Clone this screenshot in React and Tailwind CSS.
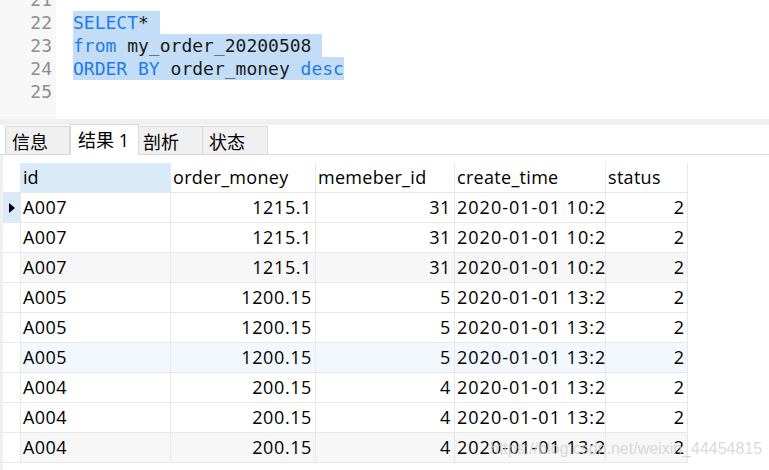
import React from "react";

const rows = [
  ["A007", "1215.1", "31", "2020-01-01 10:23:45", "2"],
  ["A007", "1215.1", "31", "2020-01-01 10:23:45", "2"],
  ["A007", "1215.1", "31", "2020-01-01 10:23:45", "2"],
  ["A005", "1200.15", "5", "2020-01-01 13:23:45", "2"],
  ["A005", "1200.15", "5", "2020-01-01 13:23:45", "2"],
  ["A005", "1200.15", "5", "2020-01-01 13:23:45", "2"],
  ["A004", "200.15", "4", "2020-01-01 13:23:45", "2"],
  ["A004", "200.15", "4", "2020-01-01 13:23:45", "2"],
  ["A004", "200.15", "4", "2020-01-01 13:23:45", "2"],
];

const rowBg = [
  "bg-white",
  "bg-white",
  "bg-[#f7f7f7]",
  "bg-white",
  "bg-white",
  "bg-[#f2f8fd]",
  "bg-white",
  "bg-white",
  "bg-[#f7f7f7]",
];

const mono = { fontFamily: '"DejaVu Sans Mono", "Liberation Mono", monospace' };

function CodeLine({ num, children }) {
  return (
    <div className="flex h-[23px] items-center">
      <div className="w-[56px] shrink-0 pr-[4px] text-right text-[#8e8e8e]">{num}</div>
      <div className="pl-[17px] whitespace-pre">{children}</div>
    </div>
  );
}

const K = ({ children }) => <span className="text-[#1f7ce8]">{children}</span>;
const Sel = ({ children }) => (
  <span className="inline-block h-[23px] leading-[23px] bg-[#c3ddf7]">{children}</span>
);

export default function App() {
  return (
    <div
      className="relative w-[769px] h-[470px] overflow-hidden bg-white text-black"
      style={{ fontFamily: '"Open Sans", "Noto Sans CJK SC", sans-serif' }}
    >
      {/* Editor */}
      <div className="relative h-[119px] overflow-hidden text-[18px]" style={mono}>
        <div className="absolute left-0 top-0 bottom-0 w-[56px] bg-[#f7f7f7]" />
        <div className="relative mt-[-12px] text-[#1a1a1a]">
          <CodeLine num="21"> </CodeLine>
          <CodeLine num="22">
            <Sel>
              <K>SELECT</K>*{" "}
            </Sel>
          </CodeLine>
          <CodeLine num="23">
            <Sel>
              <K>from</K> my_order_20200508{" "}
            </Sel>
          </CodeLine>
          <CodeLine num="24">
            <Sel>
              <K>ORDER BY</K> order_money <K>desc</K>
            </Sel>
          </CodeLine>
          <CodeLine num="25"> </CodeLine>
        </div>
      </div>

      {/* separator */}
      <div className="h-[6px] bg-[#f0f0f0]" />

      {/* Tabs */}
      <div className="flex h-[30px] items-end border-b border-[#d9d9d9] pl-[5px] text-[18px]">
        <div className="flex h-[28px] w-[65px] items-center border border-b-0 border-[#d9d9d9] bg-[#f0f0f0] pl-[6px] pt-[3px]">
          信息
        </div>
        <div className="-mb-px flex h-[31px] w-[69px] items-center border border-b-0 border-[#d9d9d9] bg-white pl-[7px] pt-[1px]">
          结果 1
        </div>
        <div className="flex h-[28px] w-[64px] items-center border border-b-0 border-l-0 border-[#d9d9d9] bg-[#f0f0f0] pl-[4px] pt-[3px]">
          剖析
        </div>
        <div className="flex h-[28px] w-[65px] items-center border border-b-0 border-l-0 border-[#d9d9d9] bg-[#f0f0f0] pl-[6px] pt-[3px]">
          状态
        </div>
      </div>

      {/* Grid */}
      <div className="flex h-[315px]">
        <div className="w-[3px] bg-[#f0f0f0]" />
        <div className="pt-[8px] text-[18px]">
          {/* header */}
          <div className="flex h-[30px] border-b border-[#e8e8e8]">
            <div className="w-[18px] border-r border-[#e8e8e8]" />
            <div className="flex w-[150px] items-center border-r border-[#e8e8e8] bg-[#d9eaf8] pl-[2px]">id</div>
            <div className="flex w-[145px] items-center border-r border-[#e8e8e8] pl-[2px] tracking-[0.3px]">order_money</div>
            <div className="flex w-[139px] items-center border-r border-[#e8e8e8] pl-[2px] tracking-[0.3px]">memeber_id</div>
            <div className="flex w-[151px] items-center border-r border-[#e8e8e8] pl-[2px] tracking-[0.3px]">create_time</div>
            <div className="flex w-[82px] items-center border-r border-[#e8e8e8] pl-[2px] tracking-[0.3px]">status</div>
          </div>
          {rows.map((r, i) => (
            <div key={i} className={`flex h-[30px] border-b border-[#e8e8e8] ${rowBg[i]}`}>
              <div
                className={`flex w-[18px] items-center justify-center border-r border-[#e8e8e8] ${
                  i === 0 ? "bg-[#d9eaf8]" : "bg-white"
                }`}
              >
                {i === 0 && (
                  <svg width="6" height="10" viewBox="0 0 6 10">
                    <path d="M0 0 L6 5 L0 10 Z" fill="#000" />
                  </svg>
                )}
              </div>
              <div className="flex w-[150px] items-center border-r border-[#e8e8e8] pl-[2px] tracking-[0.4px]">{r[0]}</div>
              <div className="flex w-[145px] items-center justify-end border-r border-[#e8e8e8] pr-[3px] tracking-[0.6px]">{r[1]}</div>
              <div className="flex w-[139px] items-center justify-end border-r border-[#e8e8e8] pr-[3px] tracking-[0.6px]">{r[2]}</div>
              <div className="flex w-[151px] items-center overflow-hidden whitespace-nowrap border-r border-[#e8e8e8] pl-[2px] tracking-[1px]">
                {r[3]}
              </div>
              <div className="flex w-[82px] items-center justify-end border-r border-[#e8e8e8] pr-[3px]">{r[4]}</div>
            </div>
          ))}
        </div>
      </div>

      {/* watermark */}
      <div
        className="pointer-events-none absolute left-[490px] top-[437px] text-[16px] text-[#cfcfcf]/80"
        style={{ fontFamily: '"Liberation Sans", Arial, sans-serif' }}
      >
        https://blog.csdn.net/weixin_44454815
      </div>
    </div>
  );
}
